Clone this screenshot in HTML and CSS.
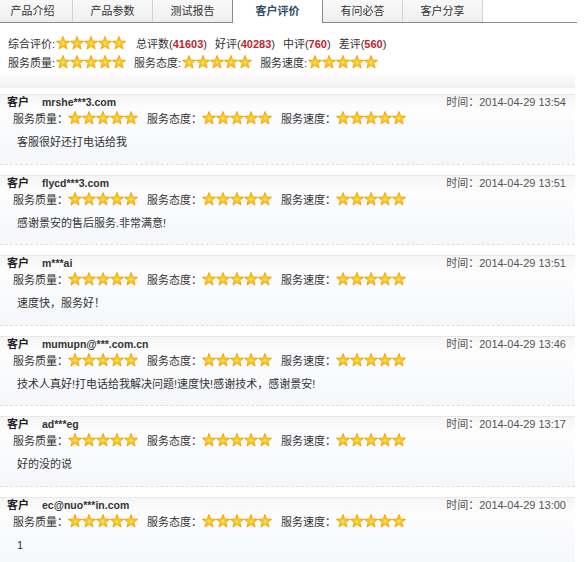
FILE: index.html
```html
<!DOCTYPE html>
<html lang="zh-CN">
<head>
<meta charset="utf-8">
<title>客户评价</title>
<link rel="stylesheet" href="styles.css">
</head>
<body>
<svg class="defs" width="0" height="0" aria-hidden="true">
  <defs>
    <radialGradient id="gold" cx="50%" cy="55%" r="55%">
      <stop offset="0" stop-color="#fff8c0"/>
      <stop offset="0.4" stop-color="#ffd21c"/>
      <stop offset="1" stop-color="#f09c00"/>
    </radialGradient>
    <symbol id="st" viewBox="0 0 14 14">
      <path d="M7 0.4 L8.76 4.97 L13.66 5.24 L9.85 8.33 L11.11 13.06 L7 10.4 L2.89 13.06 L4.15 8.33 L0.34 5.24 L5.24 4.97 Z" fill="url(#gold)" stroke="#e89a00" stroke-width="0.7" stroke-linejoin="round"/>
      <path d="M7 4.4 L7.85 6.4 L9.9 6.5 L8.3 7.8 L8.85 9.9 L7 8.8 L5.15 9.9 L5.7 7.8 L4.1 6.5 L6.15 6.4 Z" fill="#ffe560" stroke="#f0a800" stroke-width="0.5" stroke-linejoin="round"/>
    </symbol>
    <symbol id="s5" viewBox="0 0 70 14">
      <use href="#st" x="0" y="0" width="14" height="14"/>
      <use href="#st" x="14" y="0" width="14" height="14"/>
      <use href="#st" x="28" y="0" width="14" height="14"/>
      <use href="#st" x="42" y="0" width="14" height="14"/>
      <use href="#st" x="56" y="0" width="14" height="14"/>
    </symbol>
  </defs>
</svg>

<div class="page">
  <div class="tabs">
    <div class="tab">产品介绍</div>
    <div class="tab">产品参数</div>
    <div class="tab">测试报告</div>
    <div class="tab active">客户评价</div>
    <div class="tab">有问必答</div>
    <div class="tab">客户分享</div>
  </div>

  <div class="summary">
    <div class="sline">
      <span class="slabel">综合评价:</span><svg class="stars"><use href="#s5"/></svg>
      <span class="sitem first">总评数(<b class="num">41603</b>)</span>
      <span class="sitem">好评(<b class="num">40283</b>)</span>
      <span class="sitem">中评(<b class="num">760</b>)</span>
      <span class="sitem">差评(<b class="num">560</b>)</span>
    </div>
    <div class="sline">
      <span class="slabel">服务质量:</span><svg class="stars"><use href="#s5"/></svg>
      <span class="slabel gap">服务态度:</span><svg class="stars"><use href="#s5"/></svg>
      <span class="slabel gap">服务速度:</span><svg class="stars"><use href="#s5"/></svg>
    </div>
  </div>

  <div class="review">
    <div class="rhead"><span><b class="who">客户</b><span class="user">mrshe***3.com</span></span><span class="time">时间：2014-04-29 13:54</span></div>
    <div class="rbody">
      <div class="rates">
        <span class="rate">服务质量：<svg class="stars"><use href="#s5"/></svg></span>
        <span class="rate">服务态度：<svg class="stars"><use href="#s5"/></svg></span>
        <span class="rate">服务速度：<svg class="stars"><use href="#s5"/></svg></span>
      </div>
      <div class="comment">客服很好还打电话给我</div>
    </div>
  </div>

  <div class="review">
    <div class="rhead"><span><b class="who">客户</b><span class="user">flycd***3.com</span></span><span class="time">时间：2014-04-29 13:51</span></div>
    <div class="rbody">
      <div class="rates">
        <span class="rate">服务质量：<svg class="stars"><use href="#s5"/></svg></span>
        <span class="rate">服务态度：<svg class="stars"><use href="#s5"/></svg></span>
        <span class="rate">服务速度：<svg class="stars"><use href="#s5"/></svg></span>
      </div>
      <div class="comment">感谢景安的售后服务.非常满意!</div>
    </div>
  </div>

  <div class="review">
    <div class="rhead"><span><b class="who">客户</b><span class="user">m***ai</span></span><span class="time">时间：2014-04-29 13:51</span></div>
    <div class="rbody">
      <div class="rates">
        <span class="rate">服务质量：<svg class="stars"><use href="#s5"/></svg></span>
        <span class="rate">服务态度：<svg class="stars"><use href="#s5"/></svg></span>
        <span class="rate">服务速度：<svg class="stars"><use href="#s5"/></svg></span>
      </div>
      <div class="comment">速度快，服务好！</div>
    </div>
  </div>

  <div class="review">
    <div class="rhead"><span><b class="who">客户</b><span class="user">mumupn@***.com.cn</span></span><span class="time">时间：2014-04-29 13:46</span></div>
    <div class="rbody">
      <div class="rates">
        <span class="rate">服务质量：<svg class="stars"><use href="#s5"/></svg></span>
        <span class="rate">服务态度：<svg class="stars"><use href="#s5"/></svg></span>
        <span class="rate">服务速度：<svg class="stars"><use href="#s5"/></svg></span>
      </div>
      <div class="comment">技术人真好!打电话给我解决问题!速度快!感谢技术，感谢景安!</div>
    </div>
  </div>

  <div class="review">
    <div class="rhead"><span><b class="who">客户</b><span class="user">ad***eg</span></span><span class="time">时间：2014-04-29 13:17</span></div>
    <div class="rbody">
      <div class="rates">
        <span class="rate">服务质量：<svg class="stars"><use href="#s5"/></svg></span>
        <span class="rate">服务态度：<svg class="stars"><use href="#s5"/></svg></span>
        <span class="rate">服务速度：<svg class="stars"><use href="#s5"/></svg></span>
      </div>
      <div class="comment">好的没的说</div>
    </div>
  </div>

  <div class="review">
    <div class="rhead"><span><b class="who">客户</b><span class="user">ec@nuo***in.com</span></span><span class="time">时间：2014-04-29 13:00</span></div>
    <div class="rbody">
      <div class="rates">
        <span class="rate">服务质量：<svg class="stars"><use href="#s5"/></svg></span>
        <span class="rate">服务态度：<svg class="stars"><use href="#s5"/></svg></span>
        <span class="rate">服务速度：<svg class="stars"><use href="#s5"/></svg></span>
      </div>
      <div class="comment">1</div>
    </div>
  </div>
</div>
</body>
</html>
```

FILE: styles.css
```css
* { box-sizing: border-box; }

body {
  margin: 0;
  background: #fff;
  color: #333;
  font-family: "Liberation Sans", "Noto Sans CJK SC", sans-serif;
  font-size: 11px;
  overflow: hidden;
}

.defs {
  display: block;
  width: 0;
  height: 0;
  overflow: hidden;
}

.page {
  width: 577px;
}

/* tabs */
.tabs {
  display: flex;
  width: 584px;
  height: 23px;
  margin-left: -7px;
  border-bottom: 1px solid #7d8e9a;
}

.tab {
  width: 80px;
  height: 22px;
  line-height: 22px;
  text-align: center;
  color: #333;
  border-right: 1px solid #d3d3d3;
  background: linear-gradient(#f9f9f9, #efefef);
}

.tab.active {
  width: 91px;
  height: 23px;
  margin-left: -1px;
  margin-bottom: -1px;
  border-left: 1px solid #7d8e9a;
  border-right: 1px solid #7d8e9a;
  background: #fff;
  color: #2f4e68;
  font-weight: bold;
}

/* summary */
.summary {
  width: 575px;
  padding: 10px 0 17px 8px;
  margin-bottom: 6px;
  background: linear-gradient(to bottom, #fff 0, #fff 74%, #f0f0f0 100%);
}

.sline {
  display: flex;
  align-items: center;
  height: 19px;
  white-space: nowrap;
}

.slabel {
  margin-right: 1px;
}

.slabel.gap {
  margin-left: 8px;
}

.sitem {
  margin-left: 8px;
}

.sitem.first {
  margin-left: 10px;
}

.num {
  color: #c0262c;
  font-weight: bold;
}

.stars {
  display: block;
  width: 70px;
  height: 14px;
  flex: none;
}

/* reviews */
.review {
  width: 575px;
  margin-bottom: 10px;
}

.rhead {
  display: flex;
  justify-content: space-between;
  height: 16px;
  line-height: 15px;
  padding: 0 9px 0 7px;
  border-top: 1px solid #e8e8e8;
  background: linear-gradient(#f5f5f5, #fdfdfd);
  white-space: nowrap;
}

.who {
  color: #222;
  font-weight: bold;
}

.user {
  margin-left: 13px;
  color: #333;
  font-weight: bold;
  font-size: 10.5px;
}

.time {
  color: #555;
}

.rbody {
  padding: 0 0 13.6px 0;
  background: linear-gradient(#fdfdfe, #f5f7fa);
  border-bottom: 1px dashed #dedede;
}

.rates {
  display: flex;
  align-items: center;
  height: 16px;
  padding-left: 13px;
  white-space: nowrap;
}

.rate {
  display: flex;
  align-items: center;
  margin-right: 9px;
}

.comment {
  margin-top: 8px;
  padding-left: 17px;
  line-height: 16px;
  color: #333;
}
```
